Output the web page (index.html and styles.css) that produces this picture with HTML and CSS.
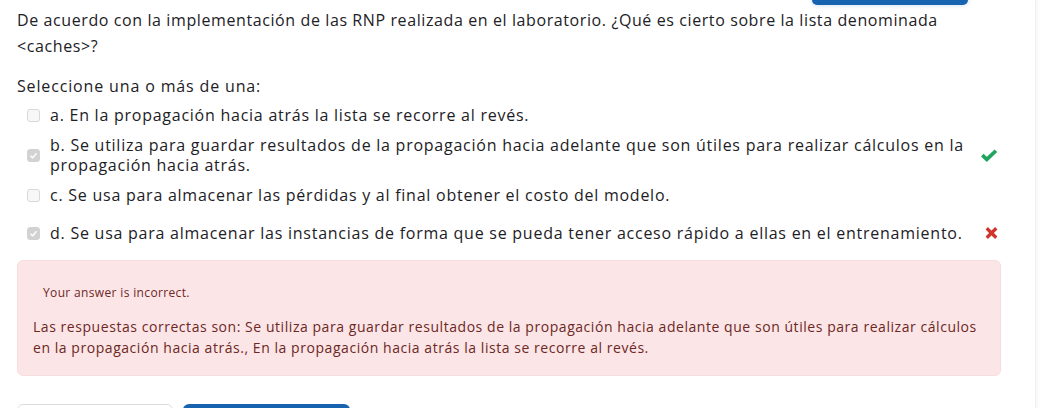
FILE: index.html
```html
<!DOCTYPE html>
<html lang="es">
<head>
<meta charset="utf-8">
<title>Pregunta</title>
<link rel="stylesheet" href="styles.css">
</head>
<body>
<div class="frame">
  <div class="page">
    <div class="prev-nav"><span class="btn-top"></span></div>
    <div class="qtext">De acuerdo con la implementación de las RNP realizada en el laboratorio. ¿Qué es cierto sobre la lista denominada &lt;caches&gt;?</div>
    <div class="prompt">Seleccione una o más de una:</div>
    <div class="answers">
      <div class="opt">
        <span class="cb"></span>
        <span class="lbl">a. En la propagación hacia atrás la lista se recorre al revés.</span>
        <span class="mark"></span>
      </div>
      <div class="opt">
        <span class="cb checked"><svg viewBox="0 0 12 12" width="9" height="9"><polyline points="2,6.5 5,9 10,3" fill="none" stroke="#fff" stroke-width="1.8"/></svg></span>
        <span class="lbl">b. Se utiliza para guardar resultados de la propagación hacia adelante que son útiles para realizar cálculos en la propagación hacia atrás.</span>
        <span class="mark"><svg viewBox="0 0 16 12" width="18" height="13"><polyline points="1.8,5.6 6,9.6 14.4,1.6" fill="none" stroke="#1fa55f" stroke-width="3.4" stroke-linejoin="miter"/></svg></span>
      </div>
      <div class="opt">
        <span class="cb"></span>
        <span class="lbl">c. Se usa para almacenar las pérdidas y al final obtener el costo del modelo.</span>
        <span class="mark"></span>
      </div>
      <div class="opt opt-last">
        <span class="cb checked"><svg viewBox="0 0 12 12" width="9" height="9"><polyline points="2,6.5 5,9 10,3" fill="none" stroke="#fff" stroke-width="1.8"/></svg></span>
        <span class="lbl">d. Se usa para almacenar las instancias de forma que se pueda tener acceso rápido a ellas en el entrenamiento.</span>
        <span class="mark"><svg viewBox="0 0 12 12" width="13" height="14"><path d="M1.6 1.6 L10.4 10.4 M10.4 1.6 L1.6 10.4" fill="none" stroke="#d1342a" stroke-width="3"/></svg></span>
      </div>
    </div>
    <div class="feedback">
      <div class="verdict">Your answer is incorrect.</div>
      <div class="rightanswer">Las respuestas correctas son: Se utiliza para guardar resultados de la propagación hacia adelante que son útiles para realizar cálculos en la propagación hacia atrás., En la propagación hacia atrás la lista se recorre al revés.</div>
    </div>
    <div class="actions">
      <span class="btn btn-sec"></span>
      <span class="btn btn-pri"></span>
    </div>
  </div>
</div>
</body>
</html>
```

FILE: styles.css
```css
* { box-sizing: border-box; }
html, body {
  margin: 0;
  padding: 0;
  background: #fff;
  overflow: hidden;
}
body {
  font-family: "Open Sans", "Noto Sans", sans-serif;
  color: #1d2125;
  width: 1044px;
  height: 408px;
}
.frame {
  width: 1036px;
  height: 408px;
  overflow: hidden;
  border-right: 1px solid #efefef;
  box-shadow: 2px 0 3px rgba(0,0,0,0.03);
}
.page {
  margin-left: 17px;
  width: 984px;
}
.prev-nav {
  display: flex;
  justify-content: flex-end;
  height: 0;
  padding-right: 33px;
}
.btn-top {
  display: block;
  width: 156px;
  height: 36px;
  margin-top: -31px;
  background: #1763b0;
  border-radius: 5px;
  box-shadow: 0 0 5px rgba(15,108,191,0.25);
}
.qtext {
  padding-top: 7px;
  font-size: 16px;
  line-height: 26px;
  letter-spacing: 0.6px;
  max-width: 960px;
}
.prompt {
  margin-top: 14px;
  font-size: 16px;
  line-height: 26px;
  letter-spacing: 0.85px;
}
.answers {
  margin-top: 1px;
}
.opt {
  display: flex;
  align-items: center;
  padding: 5px 0;
  font-size: 16px;
  font-weight: 500;
  line-height: 20px;
  letter-spacing: 0.75px;
}
.opt-last {
  margin-top: 8px;
}
.cb {
  flex: 0 0 13px;
  width: 13px;
  height: 13px;
  margin-left: 10px;
  margin-right: 10px;
  border: 1px solid #d8d8d8;
  background: #f7f7f7;
  border-radius: 3px;
  display: flex;
  align-items: center;
  justify-content: center;
}
.cb.checked {
  background: #d2d2d2;
  border-color: #d2d2d2;
}
.lbl {
  flex: 1 1 auto;
}
.mark {
  flex: 0 0 36px;
  display: flex;
  justify-content: flex-end;
  align-items: center;
  padding-right: 3px;
}
.mark svg { display: block; }
.feedback {
  margin-top: 12px;
  background: #fbe5e7;
  border: 1px solid #f8dde0;
  border-radius: 6px;
  padding: 23px 15px 14px 15px;
  color: #6d2824;
  height: 116px;
}
.verdict {
  margin-left: 10px;
  font-size: 12px;
  line-height: 18px;
  letter-spacing: 0.35px;
}
.rightanswer {
  margin-top: 14px;
  font-size: 14px;
  line-height: 21px;
  letter-spacing: 0.55px;
}
.actions {
  display: flex;
  gap: 10px;
  margin-top: 28px;
}
.btn {
  display: block;
  height: 36px;
  border-radius: 6px;
}
.btn-sec {
  width: 156px;
  border: 1px solid #dcdcdc;
  background: #fff;
}
.btn-pri {
  width: 167px;
  background: #1763b0;
}
```
